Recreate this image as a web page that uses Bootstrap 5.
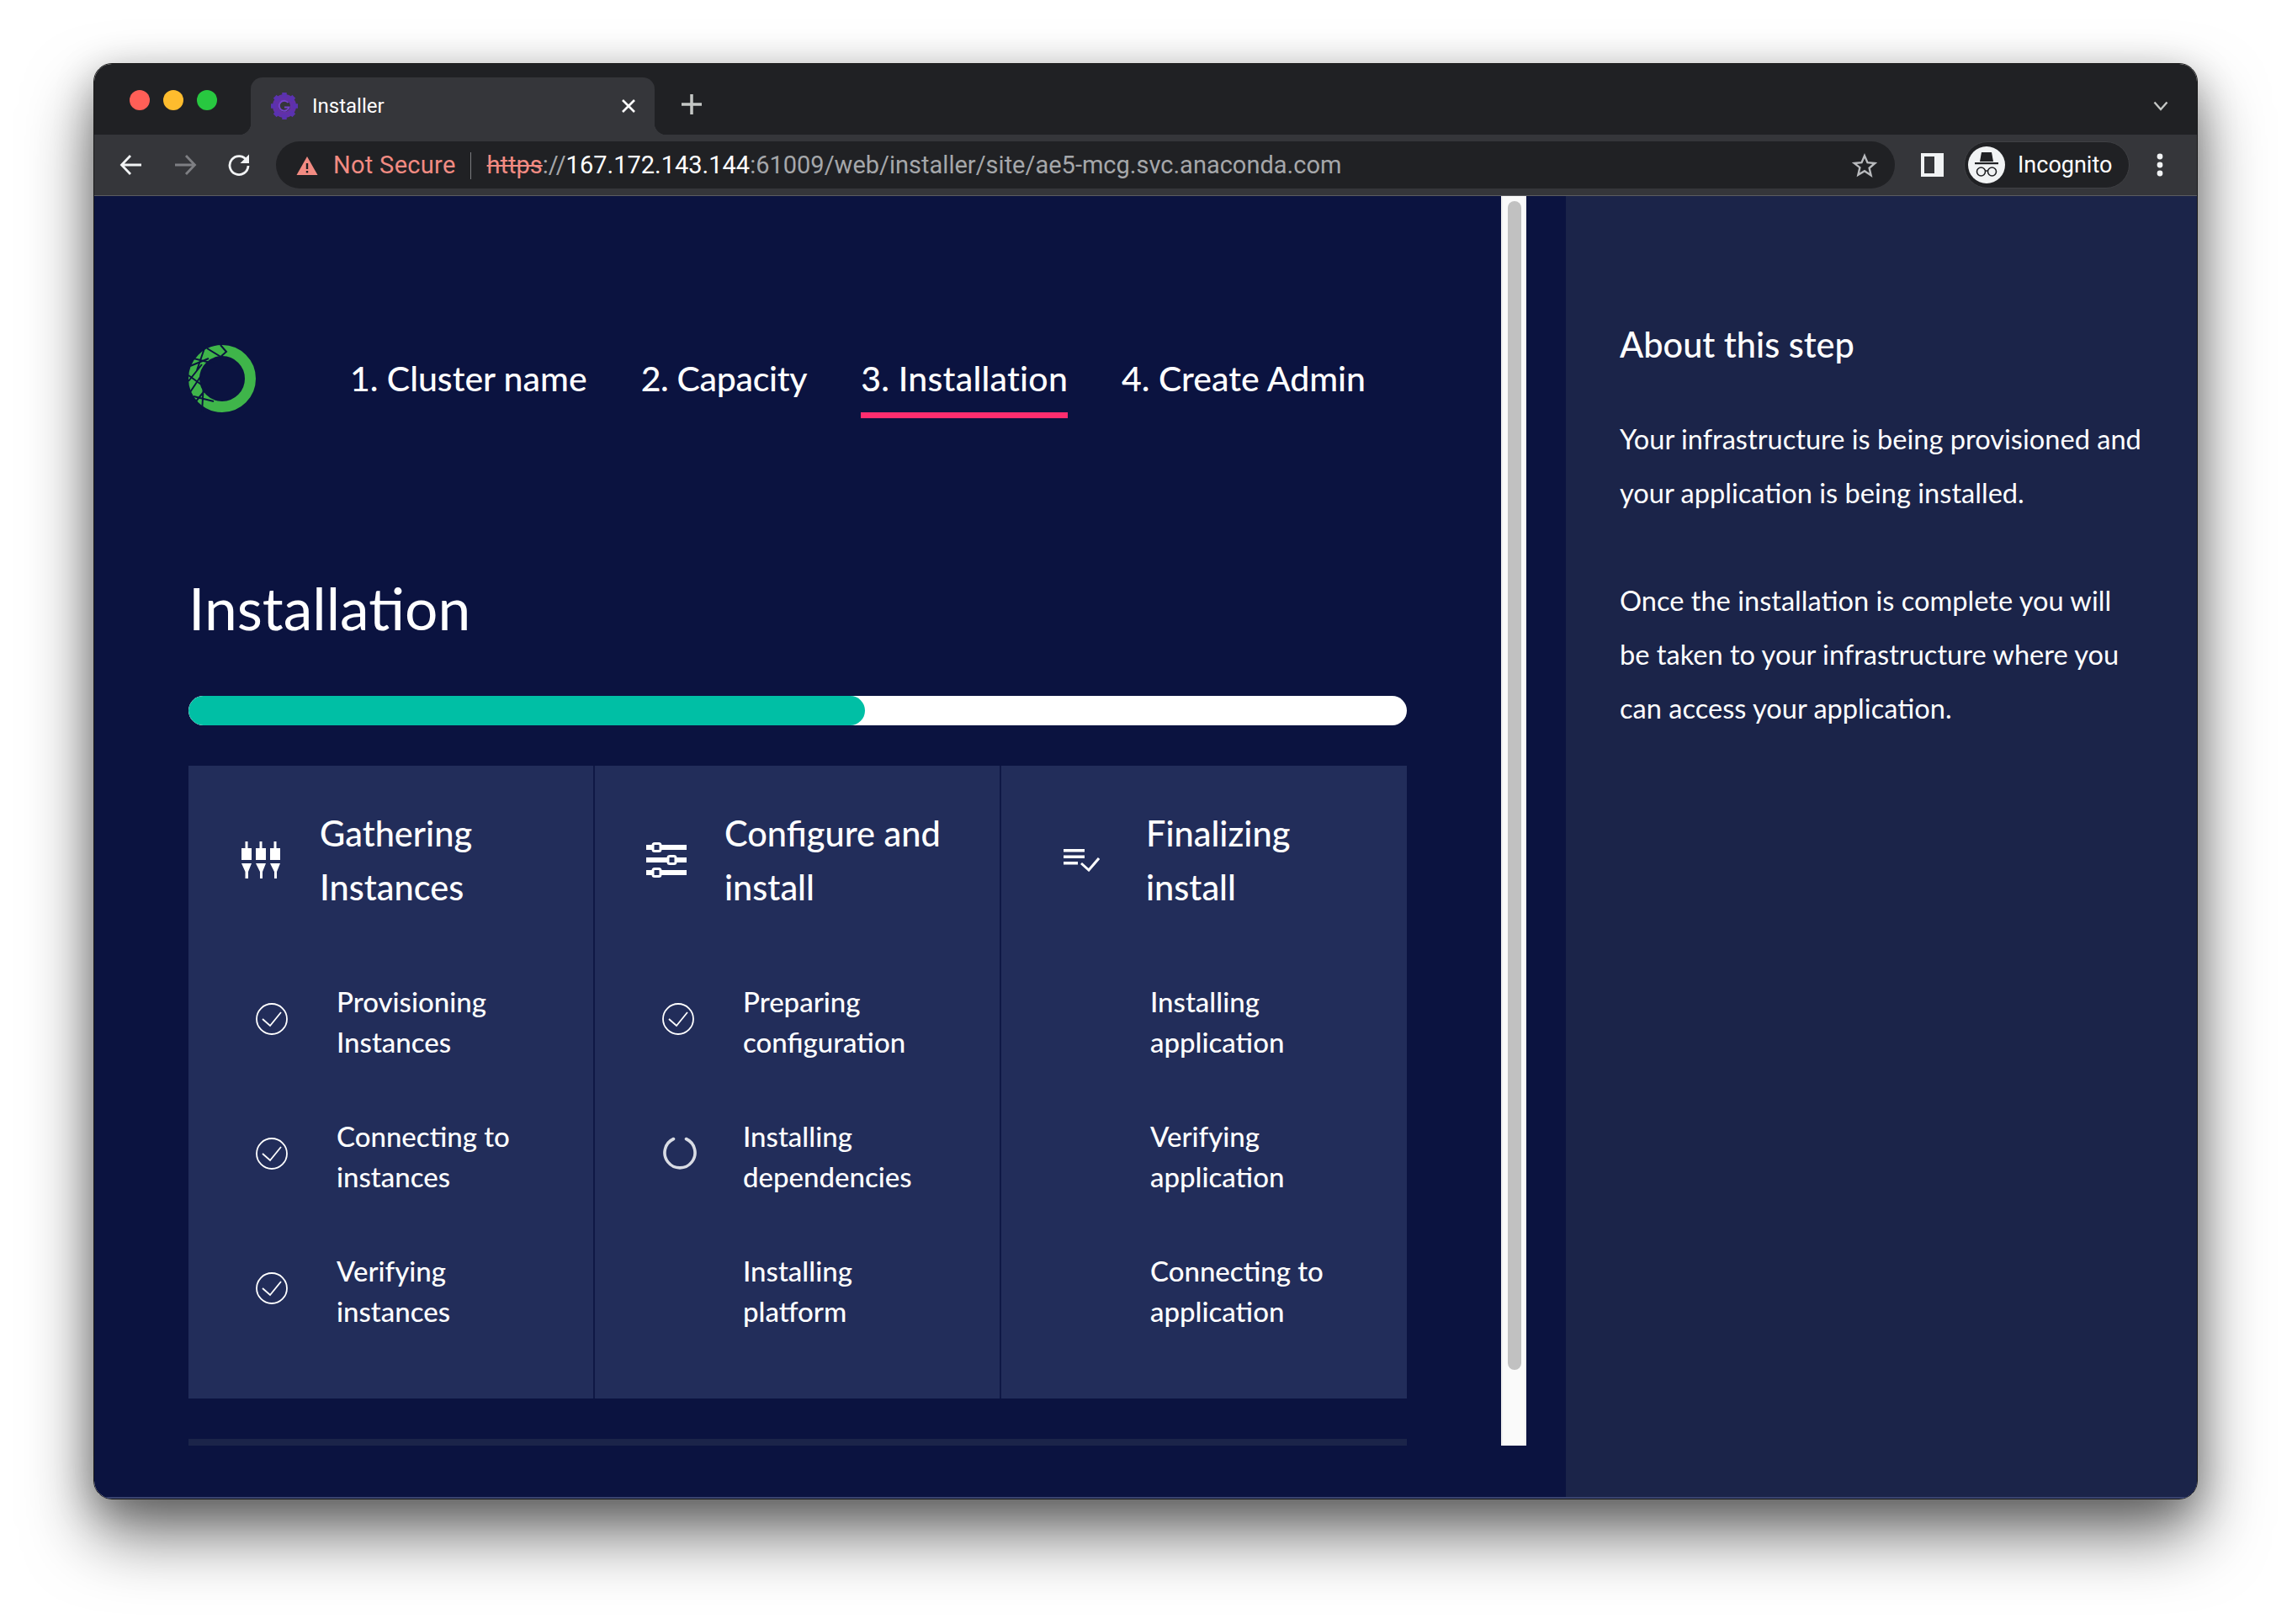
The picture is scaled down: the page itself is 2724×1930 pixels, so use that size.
<!DOCTYPE html>
<html lang="en">
<head>
    <meta charset="UTF-8">
    <meta name="viewport" content="width=device-width, initial-scale=1.0">
    <title>Installer</title>
    <link href="https://cdn.jsdelivr.net/npm/bootstrap@5.3.0/dist/css/bootstrap.min.css" rel="stylesheet">
    <style>
        body { background: #fff; font-family: Lato, "Noto Sans", sans-serif; color: #fff; min-height: 1930px; padding: 75px 0 0 111px; }
        .win-frame { width: 2501px; height: 1707px; border-radius: 22px; overflow: hidden; border: 1px solid #1a1a1a; display: flex; flex-direction: column; box-shadow: 0 42px 80px rgba(0,0,0,.55), 0 12px 45px rgba(0,0,0,.25); }
        .tab-strip { height: 84px; background: #202124; padding: 16px 0 0 42px; flex: none; font-family: Roboto, sans-serif; }
        .light-dot { width: 24px; height: 24px; border-radius: 50%; margin-top: 15px; margin-right: 16px; flex: none; }
        .dot-red { background: #ff5f57; }
        .dot-amber { background: #febc2e; }
        .dot-green { background: #28c840; }
        .tab-box { position: relative; width: 480px; height: 68px; margin-left: 24px; background: #35363a; border-radius: 14px 14px 0 0; padding: 0 20px 0 23px; font-size: 24px; }
        .tab-box::before, .tab-box::after { content: ""; position: absolute; bottom: 0; width: 14px; height: 14px; }
        .tab-box::before { left: -14px; background: radial-gradient(circle at 0 0, transparent 14px, #35363a 14.5px); }
        .tab-box::after { right: -14px; background: radial-gradient(circle at 100% 0, transparent 14px, #35363a 14.5px); }
        .tab-x { width: 22px; height: 22px; }
        .tab-plus { margin-left: 31px; margin-top: 19px; width: 26px; height: 26px; }
        .tab-chev { margin-left: auto; margin-top: 28px; margin-right: 34px; width: 18px; height: 12px; }
        .tool-strip { height: 73px; background: #35363a; border-bottom: 1px solid #5b5c60; flex: none; padding: 0 32px 0 30px; font-family: Roboto, sans-serif; }
        .tool-btn { width: 28px; height: 28px; flex: none; }
        .tool-gap { margin-left: 36px; }
        .omni-box { width: 1924px; height: 56px; margin-left: 30px; background: #202124; border-radius: 28px; padding: 1px 21px 0 24px; font-size: 29px; white-space: nowrap; }
        .omni-warn { color: #f28b82; margin-left: 18px; letter-spacing: .3px; }
        .omni-sep { width: 1px; height: 32px; background: #7b7c80; margin: 0 19px 0 17px; }
        .omni-https { color: #f28b82; text-decoration: line-through; }
        .omni-dim { color: #a5a7aa; }
        .panel-icon { width: 27px; height: 28px; margin-left: 31px; border: 4px solid #f1f3f4; border-right-width: 11px; flex: none; }
        .profile-pill { width: 197px; height: 56px; margin-left: 24px; background: #202124; border: 1px solid #3f4044; border-radius: 28px; padding-left: 4px; font-size: 27px; flex: none; }
        .profile-face { width: 44px; height: 44px; border-radius: 50%; background: #f1f3f4; margin-right: 15px; flex: none; }
        .dots-ico { width: 8px; height: 28px; margin-left: 32px; flex: none; }
        .app-area { flex: 1; min-height: 0; background: #0b1340; border-bottom: 2px solid #3a4470; }
        .main-pane { width: 1672px; height: 1485px; padding: 177px 112px 0 112px; overflow: hidden; flex: none; }
        .fake-scroll { width: 30px; height: 1485px; background: #fafafa; border-left: 2px solid #f0f0f0; border-right: 2px solid #f0f0f0; padding: 6px 6px 0; flex: none; }
        .fake-thumb { width: 16px; height: 1389px; border-radius: 8px; background: #c1c1c1; }
        .side-pane { width: 750px; margin-left: auto; background: #1b2449; padding: 148px 63px 0 64px; flex: none; }
        .logo-ico { width: 84px; height: 84px; margin: -2px 110px 0 -2px; flex: none; }
        .step-tab { font-size: 41px; font-weight: 500; margin-right: 64px; height: 87px; padding-top: 12px; line-height: 56px; white-space: nowrap; }
        .step-tab.is-on { border-bottom: 7px solid #ff2d6f; }
        .step-tight { letter-spacing: -.3px; }
        .step-wide { letter-spacing: .25px; }
        .page-title { font-size: 69.5px; font-weight: 400; margin: 185px 0 0; line-height: 80px; }
        .bar-track { height: 35px; background: #fff; border-radius: 18px; margin-top: 65px; overflow: hidden; }
        .bar-fill { height: 100%; background: #00bfa5; border-radius: 18px; }
        .stage-grid { margin-top: 48px; height: 752px; }
        .stage-col { width: 483px; background: #222d5a; border-right: 2px solid #0f1845; padding: 48px 0 0 0; flex: none; }
        .stage-col:last-child { border-right: 0; width: 482px; }
        .stage-head { font-size: 41.5px; font-weight: 500; line-height: 64px; height: 128px; margin-bottom: 48px; }
        .ico-one { margin: 0 47px 0 63px; flex: none; }
        .ico-two { margin: 0 45px 0 61px; flex: none; }
        .ico-three { margin: 0 55px 0 74px; flex: none; }
        .stage-item { height: 160px; font-size: 33px; font-weight: 500; line-height: 48px; }
        .item-ico { width: 96px; margin-left: 80px; margin-top: -16px; flex: none; }
        .item-ico-wide { width: 97px; }
        .end-rule { height: 8px; background: #1b2449; margin-top: 48px; }
        .side-title { font-size: 41.5px; font-weight: 500; line-height: 56px; margin: 0 0 53px; }
        .side-copy { font-size: 32.6px; line-height: 64px; margin: 0 0 64px; }
    </style>
</head>
<body>

<div class="win-frame">
    <div class="tab-strip d-flex align-items-start">
        <span class="light-dot dot-red"></span>
        <span class="light-dot dot-amber"></span>
        <span class="light-dot dot-green"></span>
        <div class="tab-box d-flex align-items-center">
            <svg width="34" height="34" viewBox="0 0 34 34" class="me-3"><circle cx="17" cy="17" r="10.500" fill="none" stroke="#6230a8" stroke-width="7"/><path d="M17 1v6M17 27v6M1 17h6M27 17h6M5.700 5.700l4.300 4.300M24 24l4.300 4.300M5.700 28.300L10 24M24 10l4.300-4.300" stroke="#5a32b0" stroke-width="5.500"/><path d="M21.500 13a6 6 0 1 0 1 5.500H17" fill="none" stroke="#7442cc" stroke-width="2"/></svg>
            <span>Installer</span>
            <svg class="tab-x ms-auto" viewBox="0 0 22 22"><path d="M4 4l14 14M18 4L4 18" stroke="#fff" stroke-width="2.600"/></svg>
        </div>
        <svg class="tab-plus" viewBox="0 0 26 26"><path d="M13 1v24M1 13h24" stroke="#c4c7c5" stroke-width="3.500"/></svg>
        <svg class="tab-chev" viewBox="0 0 18 12"><path d="M1.500 1.500L9 10l7.500-8.500" fill="none" stroke="#c4c7c5" stroke-width="2.400"/></svg>
    </div>

    <div class="tool-strip d-flex align-items-center">
        <svg class="tool-btn" viewBox="0 0 28 28"><path d="M26 14H3M13 3L2.500 14 13 25" fill="none" stroke="#f1f3f4" stroke-width="2.800"/></svg>
        <svg class="tool-btn tool-gap" viewBox="0 0 28 28"><path d="M2 14h23M15 3l10.500 11L15 25" fill="none" stroke="#7e7f83" stroke-width="2.800"/></svg>
        <svg class="tool-btn tool-gap" viewBox="0 0 28 28"><path d="M23.500 9A11 11 0 1 0 25 15" fill="none" stroke="#f1f3f4" stroke-width="2.800"/><path d="M26 1.500V12H15.500z" fill="#f1f3f4"/></svg>
        <div class="omni-box d-flex align-items-center">
            <svg width="26" height="24" viewBox="0 0 26 24"><path d="M13 1l12.500 22H.5z" fill="#f28b82"/><rect x="11.800" y="9" width="2.400" height="7" fill="#202124"/><rect x="11.800" y="18" width="2.400" height="2.400" fill="#202124"/></svg>
            <span class="omni-warn">Not Secure</span>
            <span class="omni-sep"></span>
            <span class="omni-https">https</span><span class="omni-dim">://</span><span>167.172.143.144</span><span class="omni-dim">:61009/web/installer/site/ae5-mcg.svc.anaconda.com</span>
            <svg width="30" height="30" viewBox="0 0 24 24" class="ms-auto"><path d="M12 2.500l2.800 6.500 7 .6-5.300 4.600 1.600 6.900L12 17l-6.100 3.600 1.600-6.900L2.200 9.600l7-.6z" fill="none" stroke="#b8babd" stroke-width="1.900"/></svg>
        </div>
        <div class="panel-icon"></div>
        <div class="profile-pill d-flex align-items-center">
            <span class="profile-face d-flex align-items-center justify-content-center">
                <svg width="30" height="32" viewBox="0 0 30 32"><path d="M9 1h12l2 11H7z" fill="#202124"/><rect x="1" y="13" width="28" height="2.200" fill="#202124"/><circle cx="8.500" cy="24" r="5" fill="none" stroke="#202124" stroke-width="1.600"/><circle cx="21.500" cy="24" r="5" fill="none" stroke="#202124" stroke-width="1.600"/><path d="M13.500 23h3" stroke="#202124" stroke-width="1.600"/></svg>
            </span>
            <span>Incognito</span>
        </div>
        <svg class="dots-ico" viewBox="0 0 8 28"><circle cx="4" cy="4" r="3.400" fill="#f1f3f4"/><circle cx="4" cy="14" r="3.400" fill="#f1f3f4"/><circle cx="4" cy="24" r="3.400" fill="#f1f3f4"/></svg>
    </div>

    <div class="app-area d-flex">
        <div class="main-pane">
            <div class="d-flex align-items-start">
                <svg class="logo-ico" viewBox="0 0 84 84">
                    <circle cx="42" cy="42" r="33.500" fill="none" stroke="#3fb54a" stroke-width="13"/>
                    <g stroke="#0b1340" stroke-width="2" fill="none">
                        <path d="M40 2l7 8-8 7M24 6l18 11M8 18l24 6M22 3L12 32M4 27l22-9M2 45l16-20M2 38l22 16M4 58l16-24M8 63l24 6M20 48l-2 34M10 70l18-22"/>
                    </g>
                </svg>
                <div class="step-tab">1. Cluster name</div>
                <div class="step-tab step-tight">2. Capacity</div>
                <div class="step-tab step-wide is-on">3. Installation</div>
                <div class="step-tab me-0">4. Create Admin</div>
            </div>

            <h1 class="page-title">Installation</h1>

            <div class="bar-track"><div class="bar-fill" style="width:55.500%"></div></div>

            <div class="stage-grid d-flex">
                <div class="stage-col">
                    <div class="stage-head d-flex align-items-center">
                        <svg class="ico-one" width="46" height="44" viewBox="0 0 46 44"><g fill="#fff"><path d="M4.500 0h3v8h-3zM21.500 0h3v8h-3zM38.500 0h3v8h-3z"/><rect y="8" width="12" height="14"/><rect x="17" y="8" width="12" height="14"/><rect x="34" y="8" width="12" height="14"/><path d="M0 26h12l-4 10v8H4.500v-8zM17 26h12l-4 10v8h-3v-8zM34 26h12l-4 10v8h-3v-8z"/></g></svg>
                        <div>Gathering<br>Instances</div>
                    </div>
                    <div class="stage-item d-flex align-items-center"><span class="item-ico"><svg width="38" height="38" viewBox="0 0 38 38"><circle cx="19" cy="19" r="18" fill="none" stroke="#fff" stroke-width="1.800"/><path d="M8 19l9 8 13-16" fill="none" stroke="#fff" stroke-width="1.800"/></svg></span><div>Provisioning<br>Instances</div></div>
                    <div class="stage-item d-flex align-items-center"><span class="item-ico"><svg width="38" height="38" viewBox="0 0 38 38"><circle cx="19" cy="19" r="18" fill="none" stroke="#fff" stroke-width="1.800"/><path d="M8 19l9 8 13-16" fill="none" stroke="#fff" stroke-width="1.800"/></svg></span><div>Connecting to<br>instances</div></div>
                    <div class="stage-item d-flex align-items-center"><span class="item-ico"><svg width="38" height="38" viewBox="0 0 38 38"><circle cx="19" cy="19" r="18" fill="none" stroke="#fff" stroke-width="1.800"/><path d="M8 19l9 8 13-16" fill="none" stroke="#fff" stroke-width="1.800"/></svg></span><div>Verifying<br>instances</div></div>
                </div>
                <div class="stage-col">
                    <div class="stage-head d-flex align-items-center">
                        <svg class="ico-two" width="48" height="42" viewBox="0 0 48 42"><g fill="#fff"><rect y="3" width="48" height="6"/><rect y="18" width="48" height="6"/><rect y="33" width="48" height="6"/></g><g fill="#222d5a" stroke="#fff" stroke-width="3"><rect x="8" y="1.500" width="9" height="9" rx="2"/><rect x="26" y="16.500" width="9" height="9" rx="2"/><rect x="8" y="31.500" width="9" height="9" rx="2"/></g></svg>
                        <div>Configure and<br>install</div>
                    </div>
                    <div class="stage-item d-flex align-items-center"><span class="item-ico"><svg width="38" height="38" viewBox="0 0 38 38"><circle cx="19" cy="19" r="18" fill="none" stroke="#fff" stroke-width="1.800"/><path d="M8 19l9 8 13-16" fill="none" stroke="#fff" stroke-width="1.800"/></svg></span><div>Preparing<br>configuration</div></div>
                    <div class="stage-item d-flex align-items-center"><span class="item-ico"><svg width="42" height="42" viewBox="0 0 42 42"><path d="M13.500 4.500A18 18 0 1 0 28.500 4.500" fill="none" stroke="#d9dce4" stroke-width="3.600" stroke-linecap="round"/></svg></span><div>Installing<br>dependencies</div></div>
                    <div class="stage-item d-flex align-items-center"><span class="item-ico"></span><div>Installing<br>platform</div></div>
                </div>
                <div class="stage-col">
                    <div class="stage-head d-flex align-items-center">
                        <svg class="ico-three" width="43" height="28" viewBox="0 0 43 28"><g fill="#fff"><rect width="25" height="3.500" y="1"/><rect width="25" height="3.500" y="8.500"/><rect width="17" height="3.500" y="16"/></g><path d="M21 18l9 8 12-14" fill="none" stroke="#fff" stroke-width="3"/></svg>
                        <div>Finalizing<br>install</div>
                    </div>
                    <div class="stage-item d-flex align-items-center"><span class="item-ico item-ico-wide"></span><div>Installing<br>application</div></div>
                    <div class="stage-item d-flex align-items-center"><span class="item-ico item-ico-wide"></span><div>Verifying<br>application</div></div>
                    <div class="stage-item d-flex align-items-center"><span class="item-ico item-ico-wide"></span><div>Connecting to<br>application</div></div>
                </div>
            </div>
            <div class="end-rule"></div>
        </div>
        <div class="fake-scroll"><div class="fake-thumb"></div></div>
        <div class="side-pane">
            <h2 class="side-title">About this step</h2>
            <p class="side-copy">Your infrastructure is being provisioned and your application is being installed.</p>
            <p class="side-copy">Once the installation is complete you will be taken to your infrastructure where you can access your application.</p>
        </div>
    </div>
</div>

<script src="https://cdn.jsdelivr.net/npm/bootstrap@5.3.0/dist/js/bootstrap.bundle.min.js"></script>
</body>
</html>
